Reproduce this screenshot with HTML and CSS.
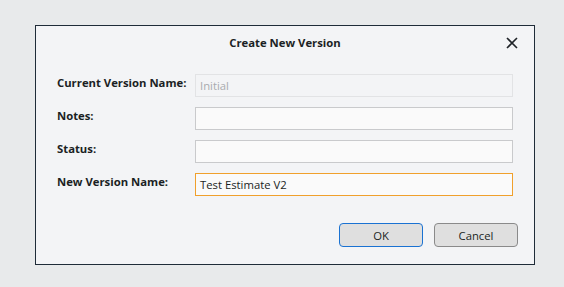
FILE: index.html
```html
<!DOCTYPE html>
<html>
<head>
<meta charset="utf-8">
<link rel="stylesheet" href="styles.css">
</head>
<body>
<div class="dialog">
  <div class="header">
    <div class="title">Create New Version</div>
    <button class="close" aria-label="Close">
      <svg width="12" height="12" viewBox="0 0 12 12"><path d="M1 1L11 11M11 1L1 11" stroke="#1f2328" stroke-width="1.6" fill="none"/></svg>
    </button>
  </div>
  <div class="form">
    <label class="label">Current Version Name:</label>
    <div class="input disabled">Initial</div>
    <label class="label">Notes:</label>
    <div class="input"></div>
    <label class="label">Status:</label>
    <div class="input"></div>
    <label class="label">New Version Name:</label>
    <div class="input focused">Test Estimate V2</div>
  </div>
  <div class="buttons">
    <button class="btn primary">OK</button>
    <button class="btn">Cancel</button>
  </div>
</div>
</body>
</html>
```
FILE: styles.css
```css
html, body {
  margin: 0;
  padding: 0;
  background: #e8eaeb;
}
body {
  padding: 25px 0 0 35px;
  font-family: "Open Sans", "Noto Sans", sans-serif;
  font-size: 11.3px;
  color: #1b1f24;
}
.dialog {
  box-sizing: border-box;
  width: 500px;
  height: 240px;
  background: #f3f4f6;
  border: 1px solid #1f2c38;
  display: flex;
  flex-direction: column;
}
.header {
  height: 34px;
  display: flex;
  align-items: center;
  justify-content: center;
  position: relative;
}
.title {
  font-weight: 700;
  font-size: 11.3px;
  padding-bottom: 2px;
}
.close {
  position: absolute;
  right: 15px;
  top: 10px;
  width: 14px;
  height: 14px;
  padding: 0;
  margin: 0;
  border: none;
  background: transparent;
  display: flex;
  align-items: center;
  justify-content: center;
}
.form {
  display: grid;
  grid-template-columns: 138px 318px;
  row-gap: 10px;
  padding: 14px 0 0 21px;
}
.label {
  font-weight: 700;
  font-size: 11.3px;
  height: 23px;
  line-height: 18px;
}
.input {
  box-sizing: border-box;
  height: 23px;
  border: 1px solid #c9cacc;
  background: #fafafa;
  padding: 0 4px;
  line-height: 22px;
  font-size: 11.3px;
  color: #1b1f24;
}
.input.disabled {
  background: #f3f4f6;
  border-color: #e2e3e5;
  color: #a9abae;
}
.input.focused {
  border-color: #f0a02c;
}
.buttons {
  display: flex;
  justify-content: flex-end;
  gap: 11px;
  padding: 27px 16px 0 0;
}
.btn {
  box-sizing: border-box;
  width: 84px;
  height: 24px;
  border: 1px solid #8a8a8a;
  border-radius: 4px;
  background: #dfdfdf;
  font-family: "Open Sans", "Noto Sans", sans-serif;
  font-size: 11.3px;
  color: #1b1f24;
  padding: 0;
}
.btn.primary {
  border-color: #1a72d2;
}
```
